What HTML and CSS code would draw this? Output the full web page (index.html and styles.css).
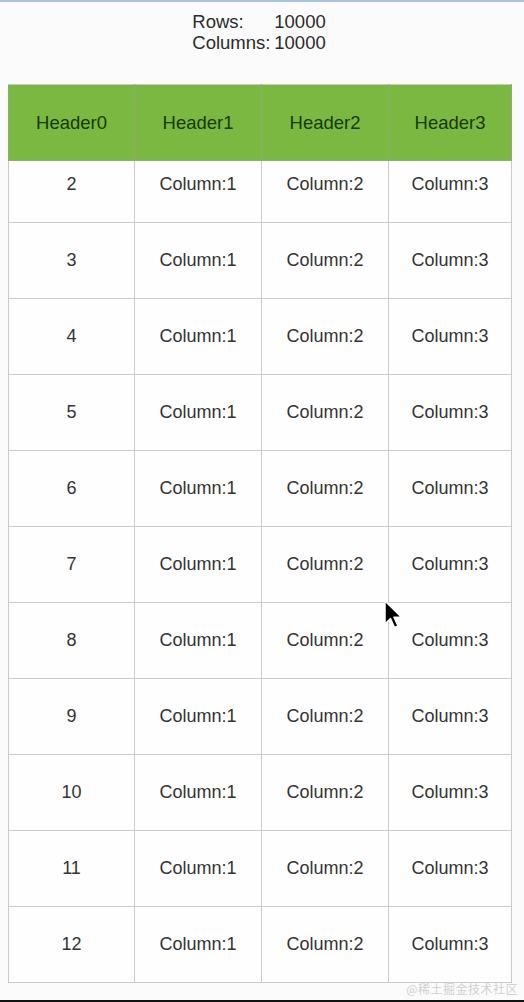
FILE: index.html
```html
<!DOCTYPE html>
<html>
<head>
<meta charset="utf-8">
<link rel="stylesheet" href="styles.css">
</head>
<body>
<div class="topbar"></div>
<div class="info">
  <div class="info-grid">
    <span>Rows:</span><span>10000</span>
    <span>Columns:</span><span>10000</span>
  </div>
</div>
<div class="table-wrap">
  <table class="grid">
    <colgroup>
      <col class="c0"><col class="c1"><col class="c2"><col class="c3">
    </colgroup>
    <thead>
      <tr class="head"><th>Header0</th><th>Header1</th><th>Header2</th><th>Header3</th></tr>
    </thead>
    <tbody>
      <tr class="first"><td>2</td><td>Column:1</td><td>Column:2</td><td>Column:3</td></tr>
      <tr><td>3</td><td>Column:1</td><td>Column:2</td><td>Column:3</td></tr>
      <tr><td>4</td><td>Column:1</td><td>Column:2</td><td>Column:3</td></tr>
      <tr><td>5</td><td>Column:1</td><td>Column:2</td><td>Column:3</td></tr>
      <tr><td>6</td><td>Column:1</td><td>Column:2</td><td>Column:3</td></tr>
      <tr><td>7</td><td>Column:1</td><td>Column:2</td><td>Column:3</td></tr>
      <tr><td>8</td><td>Column:1</td><td>Column:2</td><td>Column:3</td></tr>
      <tr><td>9</td><td>Column:1</td><td>Column:2</td><td>Column:3</td></tr>
      <tr><td>10</td><td>Column:1</td><td>Column:2</td><td>Column:3</td></tr>
      <tr><td>11</td><td>Column:1</td><td>Column:2</td><td>Column:3</td></tr>
      <tr><td>12</td><td>Column:1</td><td>Column:2</td><td>Column:3</td></tr>
    </tbody>
  </table>
  <svg class="cursor" width="22" height="34" viewBox="0 0 22 34">
    <path d="M1 1 L1 24 L6.5 18.5 L10.5 27.5 L14 26 L10 17.2 L17.5 17.2 Z" fill="#000" stroke="#fff" stroke-width="1.5" stroke-linejoin="round"/>
  </svg>
</div>
<div class="watermark">@稀土掘金技术社区</div>
<div class="bottombar"></div>
</body>
</html>
```

FILE: styles.css
```css
html, body {
  margin: 0;
  padding: 0;
  background: #fbfbfb;
  font-family: "Liberation Sans", Arial, sans-serif;
  color: #333;
}

body {
  height: 1002px;
  position: relative;
  overflow: hidden;
}

.topbar {
  height: 2px;
  background: #a9c3e6;
}

.info {
  padding-top: 9px;
  display: flex;
  justify-content: center;
  font-size: 18.5px;
  line-height: 21px;
  color: #2b2b2b;
}

.info-grid {
  display: grid;
  grid-template-columns: 82px auto;
  margin-left: -6px;
}

.table-wrap {
  margin-top: 31px;
  margin-left: 8px;
  width: 503px;
  position: relative;
}

.grid {
  border-collapse: collapse;
  table-layout: fixed;
  width: 503px;
  font-size: 18px;
}

.c0 { width: 126px; }
.c1 { width: 127px; }
.c2 { width: 127px; }
.c3 { width: 123px; }

.grid th,
.grid td {
  border: 1px solid #cbcbcb;
  text-align: center;
  padding: 0;
  font-weight: normal;
}

.grid td {
  height: 75px;
  background: #fefefe;
  color: #333;
}

.grid tr.first td {
  height: 47px;
  padding-bottom: 14px;
}

.grid .head th {
  height: 75px;
  background: #7bb841;
  color: #1a380a;
  border-color: #8fab74;
  border-top-color: #c8c8c8;
  font-size: 18.5px;
}

.cursor {
  position: absolute;
  left: 376px;
  top: 516px;
}

.watermark {
  position: absolute;
  right: 6px;
  bottom: 5px;
  font-family: "Noto Sans CJK SC", sans-serif;
  font-size: 12px;
  color: #d0d0d0;
  letter-spacing: 0.5px;
}

.bottombar {
  position: absolute;
  left: 0;
  right: 0;
  bottom: 0;
  height: 2px;
  background: #111;
}
```
